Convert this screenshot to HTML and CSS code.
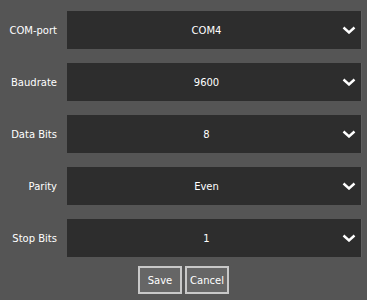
FILE: index.html
```html
<!DOCTYPE html>
<html lang="en">
<head>
    <meta charset="UTF-8">
    <title>Serial settings</title>
    <link rel="stylesheet" href="styles.css">
</head>
<body>
    <form class="settings">
        <div class="row">
            <label class="label">COM-port</label>
            <div class="select"><span class="value">COM4</span><svg class="chevron" viewBox="0 0 14 8"><path d="M1.5 1.5 L7 6.5 L12.5 1.5"/></svg></div>
        </div>
        <div class="row">
            <label class="label">Baudrate</label>
            <div class="select"><span class="value">9600</span><svg class="chevron" viewBox="0 0 14 8"><path d="M1.5 1.5 L7 6.5 L12.5 1.5"/></svg></div>
        </div>
        <div class="row">
            <label class="label">Data Bits</label>
            <div class="select"><span class="value">8</span><svg class="chevron" viewBox="0 0 14 8"><path d="M1.5 1.5 L7 6.5 L12.5 1.5"/></svg></div>
        </div>
        <div class="row">
            <label class="label">Parity</label>
            <div class="select"><span class="value">Even</span><svg class="chevron" viewBox="0 0 14 8"><path d="M1.5 1.5 L7 6.5 L12.5 1.5"/></svg></div>
        </div>
        <div class="row">
            <label class="label">Stop Bits</label>
            <div class="select"><span class="value">1</span><svg class="chevron" viewBox="0 0 14 8"><path d="M1.5 1.5 L7 6.5 L12.5 1.5"/></svg></div>
        </div>
        <div class="buttons">
            <button type="button" class="button">Save</button>
            <button type="button" class="button">Cancel</button>
        </div>
    </form>
</body>
</html>
```

FILE: styles.css
```css
html, body {
    margin: 0;
    background: #555555;
}
body {
    font-family: "DejaVu Sans", Verdana, sans-serif;
    font-size: 10px;
    color: #ffffff;
}
.settings {
    display: flex;
    flex-direction: column;
    gap: 14px;
    padding: 11px 5px 0 0;
}
.row {
    display: flex;
    align-items: center;
    height: 38px;
}
.label {
    width: 57px;
    text-align: right;
    padding-right: 10px;
    flex: none;
}
.select {
    flex: 1;
    height: 38px;
    background: #2d2d2d;
    border-right: 1px solid #5e5e5e;
    display: flex;
    align-items: center;
    padding-left: 0;
    padding-right: 5px;
}
.value {
    flex: 1;
    text-align: center;
    padding-left: 4px;
}
.chevron {
    width: 14px;
    height: 8px;
    fill: none;
    stroke: #ffffff;
    stroke-width: 2.4;
}
.buttons {
    display: flex;
    justify-content: center;
    gap: 3px;
    margin-top: -5px;
    padding-left: 5px;
}
.button {
    font-family: inherit;
    font-size: 10px;
    color: #ffffff;
    background: #666666;
    border: 2px solid #c8c8c8;
    height: 28px;
    width: 44px;
    padding: 0;
}
```
